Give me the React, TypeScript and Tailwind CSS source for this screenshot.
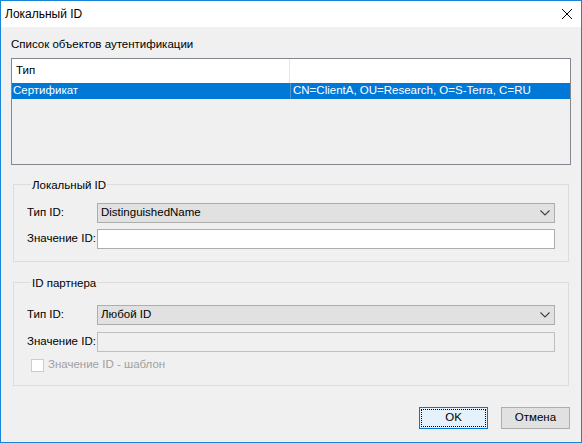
import React from 'react';

const FONT = { fontFamily: '"Liberation Sans", Arial, sans-serif' };

const Chevron: React.FC = () => (
  <svg width="10" height="6" viewBox="0 0 10 6" className="shrink-0">
    <path d="M0.5 0.5 L5 5 L9.5 0.5" fill="none" stroke="#404040" strokeWidth="1.1" />
  </svg>
);

const Combo: React.FC<{ value: string }> = ({ value }) => (
  <div className="flex-1 h-[20px] border border-[#adadad] bg-[#e1e1e1] flex items-center justify-between pl-[3px] pr-[4px]">
    <span className="text-[11.5px] leading-none text-black">{value}</span>
    <Chevron />
  </div>
);

const Row: React.FC<{ label: string; children: React.ReactNode }> = ({ label, children }) => (
  <div className="flex items-center">
    <span className="w-[70px] shrink-0 whitespace-nowrap text-[11.5px] text-black leading-none">{label}</span>
    {children}
  </div>
);

const App: React.FC = () => {
  return (
    <div style={FONT} className="w-[582px] h-[443px] border border-[#1883d7] bg-[#f0f0f0] flex flex-col select-none">
      {/* Title bar */}
      <div className="h-[26px] bg-white flex items-center justify-between pl-[4px] pr-[9px]">
        <span className="text-[12px] text-black leading-none">Локальный ID</span>
        <svg width="10" height="10" viewBox="0 0 10 10">
          <path d="M0 0 L10 10 M10 0 L0 10" stroke="#000" strokeWidth="1" />
        </svg>
      </div>

      <div className="flex-1 flex flex-col px-[10px]">
        <div className="mt-[12px] text-[11.5px] leading-none text-black">Список объектов аутентификации</div>

        {/* List */}
        <div className="mt-[7px] h-[107px] border border-[#828790] bg-[#f0f0f0] flex flex-col">
          <div className="h-[24px] bg-white flex">
            <div className="w-[278px] border-r border-[#e5e5e5] flex items-center pl-[4px] text-[11.5px] leading-none text-black">Тип</div>
            <div className="flex-1" />
          </div>
          <div className="h-[16px] bg-[#0078d7] flex text-white text-[11.5px] leading-none">
            <div className="w-[279px] border-r border-[#4f93cc] flex items-center pl-[1px]">Сертификат</div>
            <div className="flex-1 flex items-center pl-[2px]">CN=ClientA, OU=Research, O=S-Terra, C=RU</div>
          </div>
        </div>

        {/* Local ID group */}
        <fieldset className="mt-[13px] ml-[2px] mr-[2px] border border-[#dcdcdc] px-[13px] pt-[11px] pb-[12px] flex flex-col gap-[6px]">
          <legend className="ml-[4px] px-[1px] text-[11.5px] leading-[14px] text-black">Локальный ID</legend>
          <Row label="Тип ID:">
            <Combo value="DistinguishedName" />
          </Row>
          <Row label="Значение ID:">
            <div className="flex-1 h-[20px] border border-[#adadad] bg-white" />
          </Row>
        </fieldset>

        {/* Partner ID group */}
        <fieldset className="mt-[14px] ml-[2px] mr-[2px] border border-[#dcdcdc] px-[13px] pt-[15px] pb-[13px] flex flex-col gap-[7px]">
          <legend className="ml-[4px] px-[1px] text-[11.5px] leading-[14px] text-black">ID партнера</legend>
          <Row label="Тип ID:">
            <Combo value="Любой ID" />
          </Row>
          <Row label="Значение ID:">
            <div className="flex-1 h-[20px] border border-[#bfbfbf] bg-[#f0f0f0]" />
          </Row>
          <div className="flex items-center pl-[4px] gap-[4px]">
            <div className="w-[13px] h-[13px] border border-[#cccccc] bg-white" />
            <span className="text-[11.5px] leading-none text-[#a0a0a0]">Значение ID - шаблон</span>
          </div>
        </fieldset>

        {/* Buttons */}
        <div className="mt-auto mb-[13px] flex justify-end gap-[13px] pr-[1px]">
          <div className="w-[69px] h-[22px] border border-[#0078d7] bg-[#e5f1fb] flex items-center justify-center p-[1px]">
            <div className="w-full h-full border border-dotted border-black flex items-center justify-center text-[11.5px] leading-none text-black">OK</div>
          </div>
          <div className="w-[69px] h-[22px] border border-[#adadad] bg-[#e1e1e1] flex items-center justify-center text-[11.5px] leading-none text-black">Отмена</div>
        </div>
      </div>
    </div>
  );
};

export default App;
